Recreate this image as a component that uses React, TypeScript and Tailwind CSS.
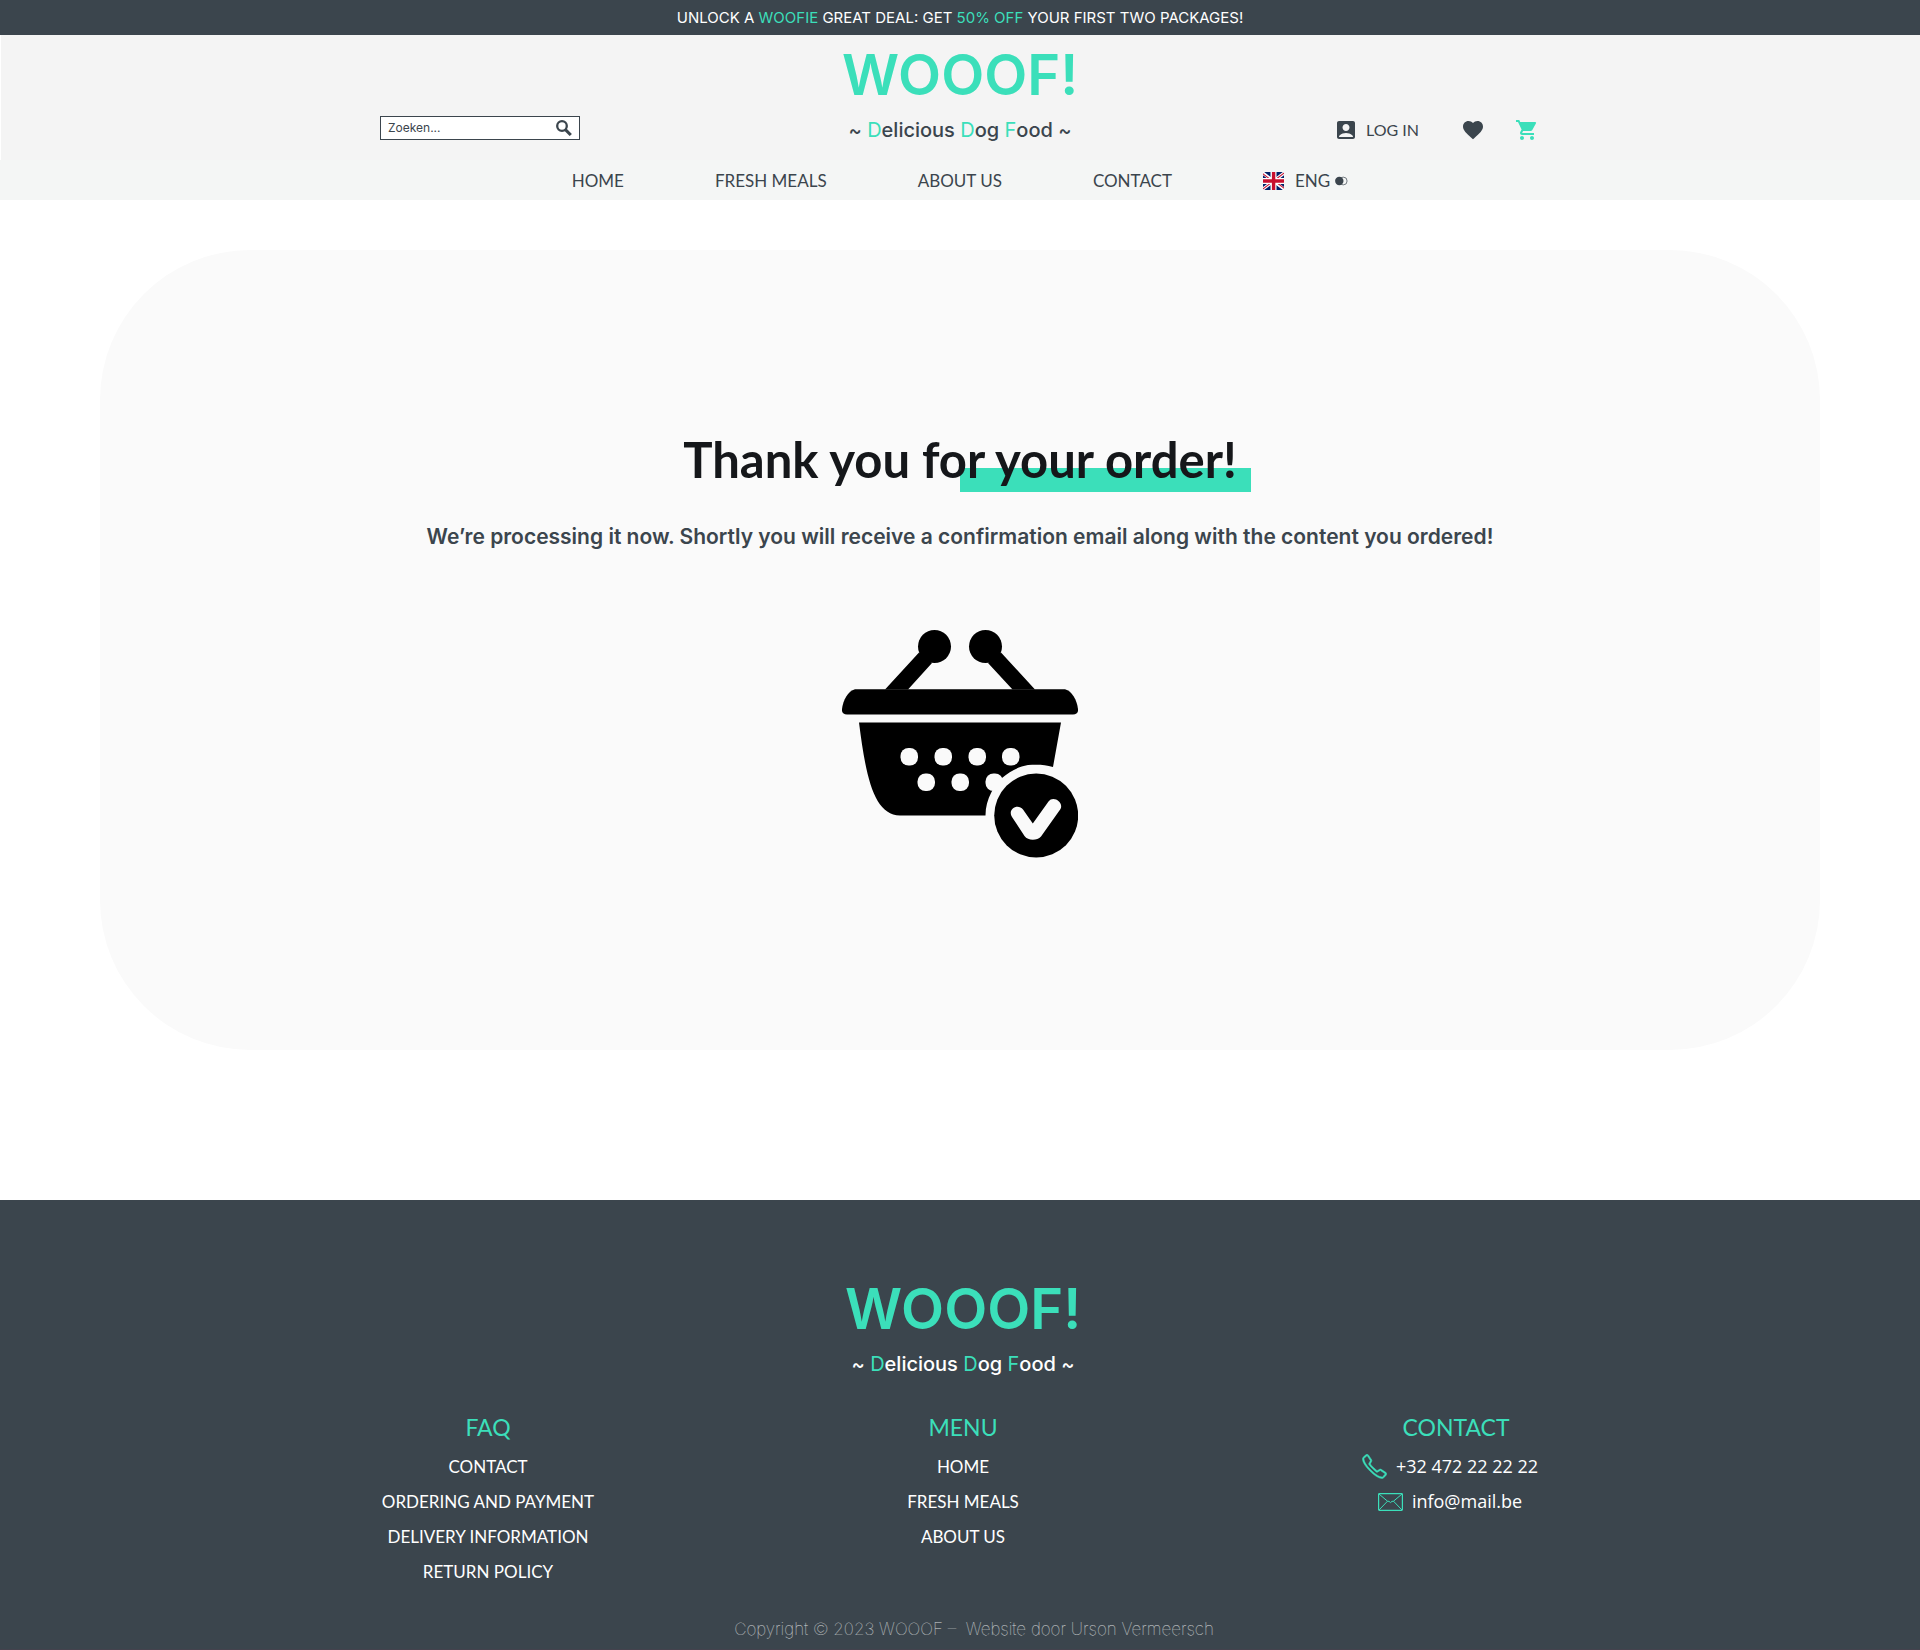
import { MdAccountBox, MdFavorite, MdShoppingCart } from "react-icons/md";
import { SlPhone } from "react-icons/sl";

const navLinks = ["HOME", "FRESH MEALS", "ABOUT US", "CONTACT"];
const faqLinks = ["CONTACT", "ORDERING AND PAYMENT", "DELIVERY INFORMATION", "RETURN POLICY"];
const menuLinks = ["HOME", "FRESH MEALS", "ABOUT US"];

function Brand() {
  return (
    <div className="flex flex-col items-center gap-[7px] text-center font-['Inter',sans-serif]">
      <a href="#" className="text-[56px] leading-[64px] font-semibold text-[#3bdfba]">
        WOOOF!
      </a>
      <p className="text-[20px] leading-[32px] font-medium whitespace-nowrap">
        ~ <span className="font-normal text-[#3bdfba]">D</span>elicious{" "}
        <span className="font-normal text-[#3bdfba]">D</span>og{" "}
        <span className="font-normal text-[#3bdfba]">F</span>ood ~
      </p>
    </div>
  );
}

function SearchIcon() {
  return (
    <svg viewBox="0 0 16 16" className="size-4" fill="none" stroke="currentColor" aria-hidden="true">
      <circle cx="6" cy="6" r="4.8" strokeWidth="2.3" />
      <path d="M9.4 9.6 14.8 15" strokeWidth="3" />
    </svg>
  );
}

function BritishFlag() {
  return (
    <svg viewBox="0 0 21 18" className="h-[18px] w-[21px]" aria-hidden="true">
      <path fill="#012169" d="M0 0h21v18H0z" />
      <path stroke="#fff" strokeWidth="3.2" d="M-1.5 0 22.5 18M22.5 0-1.5 18" />
      <path
        stroke="#c8102e"
        strokeWidth="1.1"
        d="M-1.5.8 10.5 9.8M22.5 17.2 10.5 8.2M22.5 0 10.5 9M-1.5 18 10.5 9"
      />
      <path fill="#fff" d="M7.5 0h6v18h-6zM0 6h21v6H0z" />
      <path fill="#c8102e" d="M8.9 0h3.4v18H8.900zM0 7.300h21v3.400H0z" />
    </svg>
  );
}

function ToggleIcon() {
  return (
    <svg viewBox="0 0 13 10" className="h-[10px] w-[13px]" aria-hidden="true">
      <circle cx="8.200" cy="5" r="3.900" fill="none" stroke="#3b454d" strokeWidth=".7" />
      <circle cx="4.300" cy="5" r="4.200" fill="#3b454d" />
    </svg>
  );
}

function BasketIcon() {
  return (
    <svg viewBox="0 0 236 228" className="h-[228px] w-[236px]" aria-hidden="true">
      <g fill="#000">
        <circle cx="92.500" cy="16.500" r="16.500" />
        <circle cx="143.500" cy="16.500" r="16.500" />
        <path d="M77 22.500 43 59.500H66L90 33zM159 22.500 193 59.500H170.500L146 33z" />
        <path d="M13 59.200H223C230 61 235 70 236 79V81C235.500 83 234 84.500 231 84.500H5C2 84.500 .5 83 0 81V79C1 70 6 61 13 59.200z" />
        <path d="M17 92.500H219L211 137C203 134.500 195 134.500 186 135C176 137 168 141 160 148A49.500 49.500 0 0 0 149.500 162C145.500 170 143.500 177 143.500 185.500H58C32 185 24 148 17 92.500z" />
      </g>
      <g fill="#fafafa">
        <rect x="58.500" y="118" width="17.500" height="17.500" rx="8" />
        <rect x="92.500" y="118" width="17.500" height="17.500" rx="8" />
        <rect x="126.500" y="118" width="17.500" height="17.500" rx="8" />
        <rect x="160" y="118" width="17.500" height="17.500" rx="8" />
        <rect x="75.500" y="143.500" width="17.500" height="17.500" rx="8" />
        <rect x="109.500" y="143.500" width="17.500" height="17.500" rx="8" />
        <rect x="143.500" y="143.500" width="17.500" height="17.500" rx="8" />
      </g>
      <circle cx="194.200" cy="185.500" r="42" fill="#000" />
      <path
        fill="#fafafa"
        d="M170 187C165 179 176 173 181 179.500L190.800 193.500 206.500 171.500C211 165 222 172 218.500 179L199 206.500C195 211 186 211 182.500 206z"
      />
    </svg>
  );
}

function EnvelopeIcon() {
  return (
    <svg viewBox="0 0 25 18" className="h-[18px] w-[25px]" fill="none" stroke="currentColor" aria-hidden="true">
      <rect x=".6" y=".6" width="23.800" height="16.800" rx=".8" strokeWidth="1.200" />
      <path d="M1 1 9.500 8.200Q11 7.800 12.500 9.600 14 7.800 15.500 8.200L24 1M1 17 9.500 8.200M24 17 15.500 8.200" />
    </svg>
  );
}

function FooterColumn({ title, links }: { title: string; links: string[] }) {
  return (
    <section className="text-center">
      <h2 className="text-[23px] leading-[40px] text-[#3bdfba]">{title}</h2>
      <ul className="pt-[2px]">
        {links.map((link) => (
          <li key={link}>
            <a href="#" className="text-[17px] leading-[35px] whitespace-nowrap">
              {link}
            </a>
          </li>
        ))}
      </ul>
    </section>
  );
}

export default function App() {
  return (
    <div className="bg-white font-['Lato',sans-serif] text-[#3b454d]">
      <p className="bg-[#3b454d] text-center font-['Inter',sans-serif] text-[15px] leading-[35px] text-white">
        UNLOCK A <span className="text-[#3bdfba]">WOOFIE</span> GREAT DEAL: GET{" "}
        <span className="text-[#3bdfba]">50% OFF</span> YOUR FIRST TWO PACKAGES!
      </p>

      <header>
        <div className="border-l border-white bg-[#f4f4f4] pt-2 pr-px pb-[14px]">
          <div className="mx-auto grid max-w-[1160px] grid-cols-[1fr_auto_1fr] items-end">
            <form className="mb-[6px] flex h-6 w-[200px] items-center border border-[#3b454d] bg-white px-[7px]">
              <input
                type="text"
                aria-label="Zoeken"
                placeholder="Zoeken..."
                className="min-w-0 flex-1 font-['Inter',sans-serif] text-[12px] leading-[20px] outline-none placeholder:text-[#3b454d]"
              />
              <button type="button" aria-label="Search">
                <SearchIcon />
              </button>
            </form>
            <Brand />
            <div className="mb-1 flex items-center justify-end pr-px">
              <a href="#" className="mr-[42px] flex items-center gap-2 text-[16px] leading-6">
                <MdAccountBox className="size-6" />
                LOG IN
              </a>
              <a href="#" aria-label="Favourites" className="mr-[30px]">
                <MdFavorite className="size-6" />
              </a>
              <a href="#" aria-label="Shopping cart" className="text-[#3bdfba]">
                <MdShoppingCart className="size-6" />
              </a>
            </div>
          </div>
        </div>
        <nav className="flex h-10 items-center justify-center gap-[91px] bg-[#f4f6f5] pt-[2px] text-[17px] leading-6">
          {navLinks.map((link) => (
            <a key={link} href="#">
              {link}
            </a>
          ))}
          <button type="button" className="flex items-center">
            <BritishFlag />
            <span className="mr-[5px] ml-[11px]">ENG</span>
            <ToggleIcon />
          </button>
        </nav>
      </header>

      <main className="mx-[100px] mt-[50px] flex flex-col items-center rounded-[150px] bg-[#fafafa] pt-[179px] pb-[192px] text-center">
        <h1 className="relative isolate px-[14px] text-[49px] leading-[60px] font-bold text-[#15171a]">
          <span className="absolute right-0 left-1/2 -z-10 mt-[39px] h-6 bg-[#3bdfba]" />
          Thank you for your order!
        </h1>
        <p className="mt-8 font-['Inter',sans-serif] text-[21px] leading-[32px] font-semibold">
          We’re processing it now. Shortly you will receive a confirmation email along with the content you ordered!
        </p>
        <div className="mt-[77px]">
          <BasketIcon />
        </div>
      </main>

      <footer className="mt-[150px] border-b border-[#44424d] bg-[#3b454d] pt-[77px] pb-2 pl-[6px] text-white">
        <Brand />
        <div className="mx-auto mt-[27px] grid max-w-[1166px] grid-cols-[216px_1fr_216px]">
          <FooterColumn title="FAQ" links={faqLinks} />
          <FooterColumn title="MENU" links={menuLinks} />
          <section className="pl-6 text-center">
            <h2 className="pl-3 text-[23px] leading-[40px] text-[#3bdfba]">CONTACT</h2>
            <address className="flex flex-col items-center pt-[2px] font-['Open_Sans',sans-serif] text-[18px] leading-[35px] whitespace-nowrap not-italic">
              <a href="tel:+32472222222" className="flex items-center gap-[9px]">
                <SlPhone className="size-[25px] stroke-[#3bdfba] stroke-[20] text-[#3bdfba]" />
                +32 472 22 22 22
              </a>
              <a href="mailto:info@mail.be" className="flex items-center gap-[9px]">
                <span className="text-[#3bdfba]">
                  <EnvelopeIcon />
                </span>
                info@mail.be
              </a>
            </address>
          </section>
        </div>
        <p className="mt-7 pl-[22px] text-center font-['Inter',sans-serif] text-[17px] leading-6 font-thin whitespace-pre text-white/80">
          {"Copyright © 2023 WOOOF –  Website door Urson Vermeersch"}
        </p>
      </footer>
    </div>
  );
}
